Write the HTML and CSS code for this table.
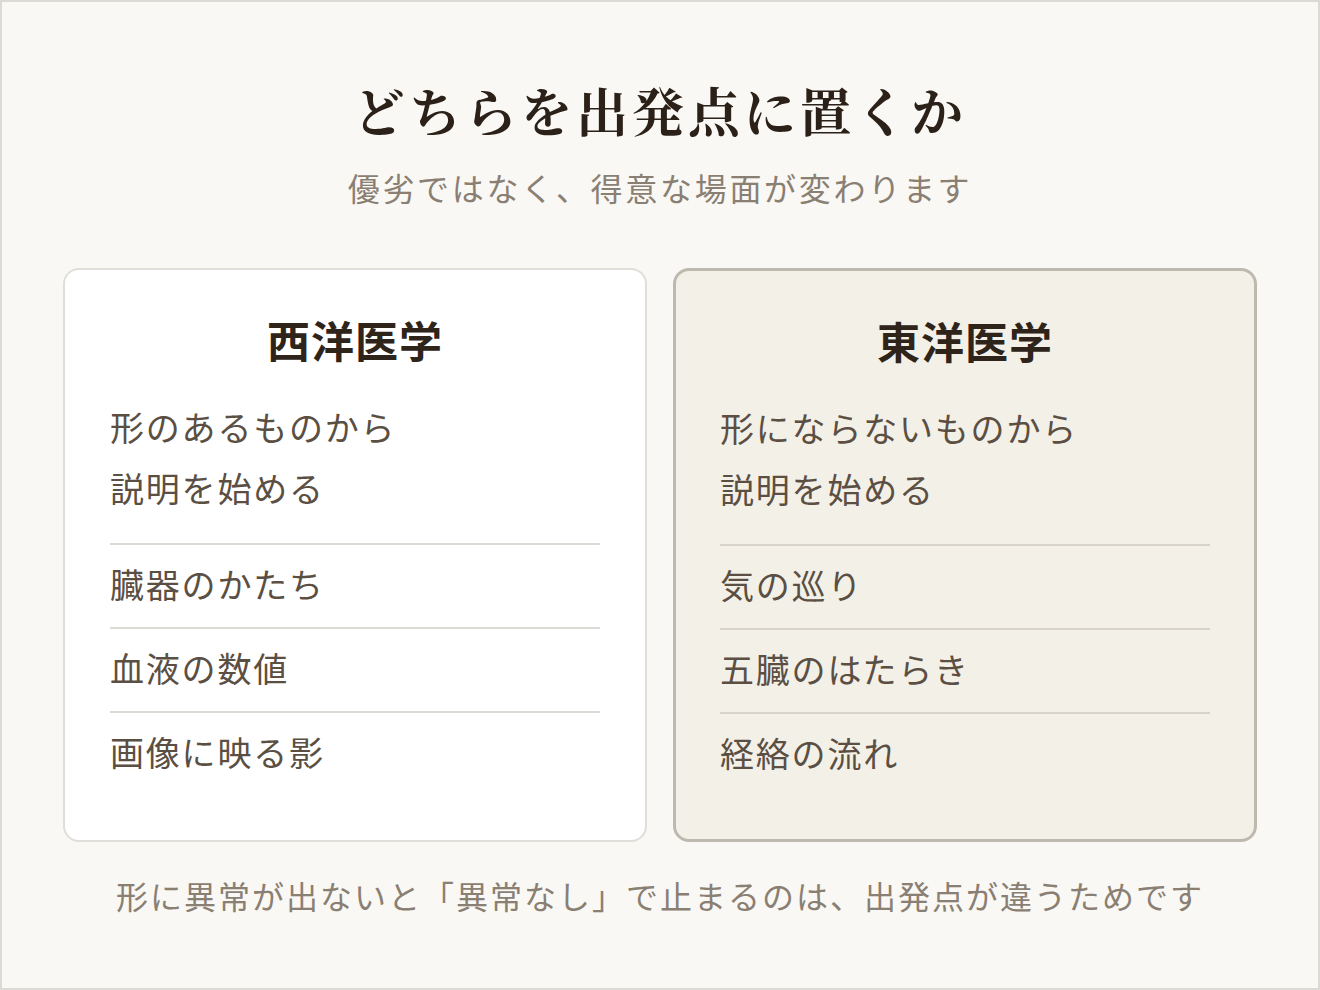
FILE: index.html
```html
<!DOCTYPE html>
<html lang="ja">
<head>
    <meta charset="UTF-8">
    <meta name="viewport" content="width=device-width, initial-scale=1.0">
    <title>どちらを出発点に置くか</title>
    <link rel="stylesheet" href="styles.css">
</head>
<body>
    <div class="page">
        <h1 class="title">どちらを出発点に置くか</h1>
        <p class="sub">優劣ではなく、得意な場面が変わります</p>

        <div class="cards">
            <!-- 西洋医学 -->
            <div class="card">
                <h2>西洋医学</h2>
                <p class="lead">形のあるものから<br>説明を始める</p>
                <ul>
                    <li>臓器のかたち</li>
                    <li>血液の数値</li>
                    <li>画像に映る影</li>
                </ul>
            </div>
            <!-- 東洋医学 -->
            <div class="card east">
                <h2>東洋医学</h2>
                <p class="lead">形にならないものから<br>説明を始める</p>
                <ul>
                    <li>気の巡り</li>
                    <li>五臓のはたらき</li>
                    <li>経絡の流れ</li>
                </ul>
            </div>
        </div>

        <p class="note">形に異常が出ないと「異常なし」で止まるのは、出発点が違うためです</p>
    </div>
</body>
</html>
```

FILE: styles.css
```css
*{
    margin: 0;
    padding: 0;
    box-sizing: border-box;
}

ul{
    list-style: none;
}

html, body{
    height: 100%;
}

body{
    background: #faf8f4;
    font-family: "Noto Sans CJK JP", "Noto Sans", sans-serif;
}

.page{
    height: 990px;
    border: 2px solid #dcdad5;
    padding: 0 61px;
}

.title{
    margin-top: 75px;
    text-align: center;
    font-family: "Noto Serif CJK JP", "Noto Sans CJK JP", serif;
    font-weight: 700;
    font-size: 52px;
    line-height: 66px;
    letter-spacing: 3.8px;
    color: #2b2118;
}

.sub{
    margin-top: 22px;
    text-align: center;
    font-size: 32px;
    line-height: 44px;
    letter-spacing: 2.7px;
    color: #8a7f73;
}

.cards{
    margin-top: 59px;
    display: grid;
    grid-template-columns: 1fr 1fr;
    gap: 26px;
}

.card{
    background: #fff;
    border: 2px solid #e0ded9;
    border-radius: 16px;
    padding: 43px 45px 44px;
}

.card.east{
    background: #f3f0e8;
    border: 3px solid #bdb9ae;
    padding: 43px 44px 43px;
}

.card h2{
    text-align: center;
    font-size: 43px;
    line-height: 52px;
    letter-spacing: 1px;
    font-weight: 700;
    color: #2e241a;
}

.card .lead{
    margin-top: 31px;
    padding-bottom: 25px;
    font-size: 34px;
    line-height: 61px;
    letter-spacing: 1.8px;
    color: #5b4f43;
}

.card li{
    border-top: 2px solid #dddbd6;
    padding: 15px 0 19px;
    font-size: 34px;
    line-height: 48px;
    letter-spacing: 1.8px;
    color: #5b4f43;
}

.card.east li{
    border-top-color: #d8d4ca;
}

.note{
    margin-top: 30px;
    text-align: center;
    font-size: 32px;
    line-height: 46px;
    letter-spacing: 2px;
    color: #8a7f73;
}
```
